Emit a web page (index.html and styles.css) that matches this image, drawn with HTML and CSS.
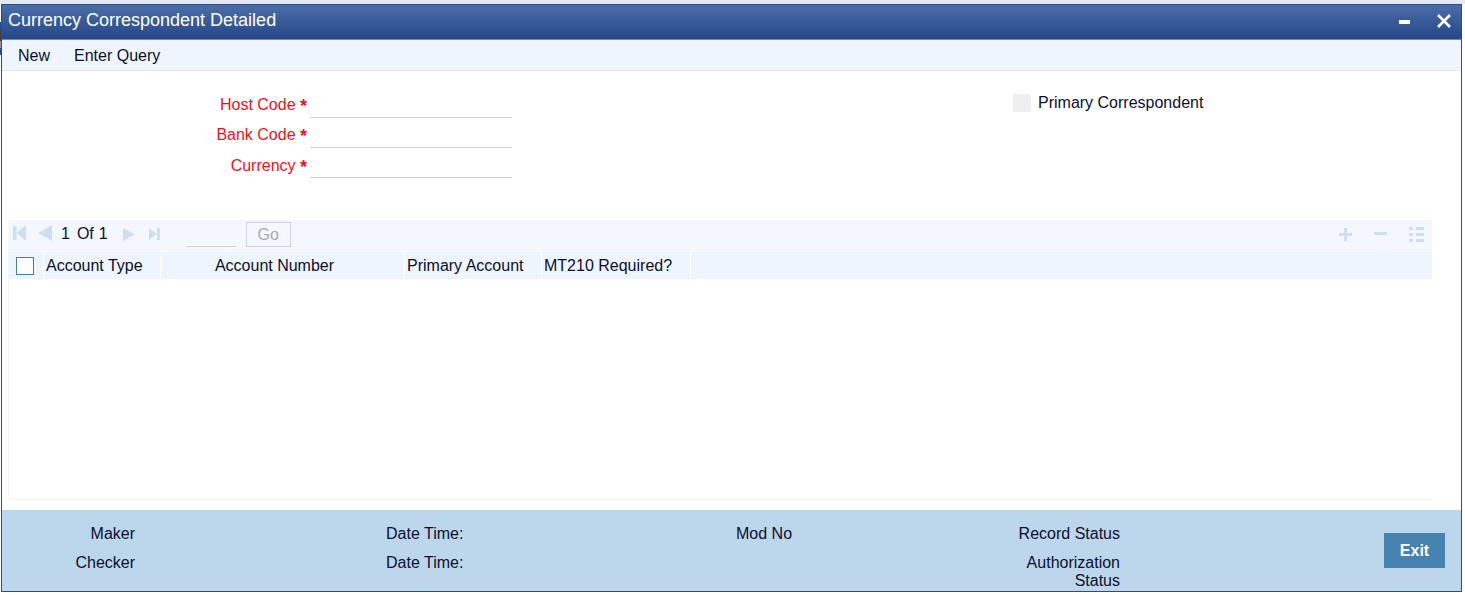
FILE: index.html
```html
<!DOCTYPE html>
<html lang="en">
<head>
<meta charset="utf-8">
<title>Currency Correspondent Detailed</title>
<link rel="stylesheet" href="styles.css">
</head>
<body>
<div class="window">
  <header class="titlebar">
    <h1 class="title">Currency Correspondent Detailed</h1>
    <div class="win-controls">
      <svg class="win-min" width="11" height="4" viewBox="0 0 11 4"><rect width="11" height="4" fill="#fff"/></svg>
      <svg class="win-close" width="14" height="14" viewBox="0 0 14 14"><path d="M1 1 L13 13 M13 1 L1 13" stroke="#fff" stroke-width="2.6" fill="none"/></svg>
    </div>
  </header>
  <nav class="menubar">
    <span class="menu-item">New</span>
    <span class="menu-item">Enter Query</span>
  </nav>
  <main class="content">
    <section class="form">
      <div class="fields">
        <div class="field"><label class="req-label">Host Code <span class="star">*</span></label><span class="line"></span></div>
        <div class="field"><label class="req-label">Bank Code <span class="star">*</span></label><span class="line"></span></div>
        <div class="field third"><label class="req-label">Currency <span class="star">*</span></label><span class="line"></span></div>
      </div>
      <div class="primary">
        <span class="check-disabled"></span>
        <span>Primary Correspondent</span>
      </div>
    </section>
    <section class="grid">
      <div class="pager">
        <div class="pager-left">
          <svg class="pg p-first" width="13" height="16" viewBox="0 0 13 16"><path d="M0 1h3.500v14H0z M13 0v16L3.500 8z" fill="#cfdff3"/></svg>
          <svg class="pg p-prev" width="14" height="16" viewBox="0 0 14 16"><path d="M14 0v16L0 8z" fill="#cfdff3"/></svg>
          <span class="pg-text t-cur">1</span><span class="pg-text t-of">Of</span><span class="pg-text t-tot">1</span>
          <svg class="pg p-next" width="12" height="13" viewBox="0 0 12 13"><path d="M0 0v13L12 6.500z" fill="#cfdff3"/></svg>
          <svg class="pg p-last" width="11" height="12" viewBox="0 0 11 12"><path d="M0 0v12L8 6z M8 0h3v12H8z" fill="#cfdff3"/></svg>
          <span class="pg-input"></span>
          <span class="go">Go</span>
        </div>
        <div class="pager-right">
          <svg width="13" height="13" viewBox="0 0 13 13"><path d="M5 0h3v5h5v3H8v5H5V8H0V5h5z" fill="#cfdff3"/></svg>
          <svg width="13" height="13" viewBox="0 0 13 13"><rect y="4" width="13" height="3" fill="#cfdff3"/></svg>
          <svg width="15" height="15" viewBox="0 0 15 15"><path d="M0 0h4v3H0z M7 0h8v3H7z M0 6h4v3H0z M7 6h8v3H7z M0 12h4v3H0z M7 12h8v3H7z" fill="#cfdff3"/></svg>
        </div>
      </div>
      <div class="grid-head">
        <div class="col c-check"><span class="checkbox"></span></div>
        <div class="col c-type">Account Type</div>
        <div class="col c-number">Account Number</div>
        <div class="col c-primary">Primary Account</div>
        <div class="col c-mt">MT210 Required?</div>
        <div class="col c-rest"></div>
      </div>
      <div class="grid-body"></div>
    </section>
  </main>
  <footer class="footer">
    <div class="audit a1"><span>Maker</span><span>Checker</span></div>
    <div class="audit a2"><span>Date Time:</span><span>Date Time:</span></div>
    <div class="audit a3"><span>Mod No</span></div>
    <div class="audit a4"><span>Record Status</span><span class="auth">Authorization Status</span></div>
    <button class="exit" type="button">Exit</button>
  </footer>
</div>
</body>
</html>
```
FILE: styles.css
```css
* { box-sizing: border-box; }
html, body { margin: 0; padding: 0; height: 100%; background: #fff; overflow: hidden; }
body {
  padding: 4px 3px 3px 1px;
  font-family: "Liberation Sans", Arial, sans-serif;
  font-size: 16px;
  color: #0a0f2c;
  background: linear-gradient(#e4e8f5 0 4px, #fff 4px 22px, #2b4c8c 22px 30px, #4a3f3c 30px 41px, #9a9a9a 41px 48px, #2b4c8c 48px 55px, #fff 55px) 0 0 / 1px 100% no-repeat, linear-gradient(#e4e8f5, #e4e8f5) 0 0 / 100% 4px no-repeat, #fff;
}
.window { height: 588px; display: flex; flex-direction: column; border: 1px solid #2b4c8c; background: #fff; }
.titlebar { height: 35px; flex: none; display: flex; justify-content: space-between; align-items: center; padding: 0 10px 0 6px; background: linear-gradient(#4a6fa8, #264688); border-bottom: 1px solid #6f8bb5; }
.title { margin: 0 0 4px; font-size: 18px; font-weight: 400; color: #fff; }
.win-controls { display: flex; align-items: center; gap: 27px; }
.win-min { display: block; }
.win-close { display: block; margin-bottom: 2px; }
.menubar { height: 31px; flex: none; display: flex; align-items: center; background: #eef5fe; border-bottom: 1px solid #e8e8ee; padding: 1px 0 0 16px; gap: 24px; }
.content { flex: 1; min-height: 0; padding: 0 29px 0 6px; display: flex; flex-direction: column; }
.form { height: 149px; display: flex; flex: none; position: relative; }
.fields { width: 504px; padding-top: 17px; display: flex; flex-direction: column; }
.field { height: 30px; display: flex; justify-content: flex-end; }
.req-label { color: #f0101e; line-height: 34px; margin-right: 3px; white-space: nowrap; }
.third .req-label { line-height: 36px; }
.star { font-size: 18px; font-weight: 700; line-height: 0; vertical-align: -2px; }
.line { width: 202px; height: 30px; border-bottom: 1px solid #d2d2d2; flex: none; }
.primary { position: absolute; left: 1005px; top: 23px; display: flex; align-items: center; gap: 7px; }
.check-disabled { width: 18px; height: 18px; background: #efefef; display: block; }
.grid { flex: 1; min-height: 0; display: flex; flex-direction: column; }
.pager { height: 31px; flex: none; display: flex; justify-content: space-between; align-items: flex-start; background: #f4f8fe; padding: 0 8px 0 5px; }
.pager-left { height: 28px; display: flex; align-items: center; }
.pg { display: block; margin-top: -2px; }
.p-prev { margin-left: 12px; }
.p-next { margin-left: 15px; margin-top: 0; }
.p-last { margin-left: 14px; margin-top: 0; }
.pg-text { color: #0a0f2c; }
.t-cur { margin-left: 9px; }
.t-of { margin-left: 7px; }
.t-tot { margin-left: 5px; }
.pg-input { width: 50px; height: 25px; border-bottom: 1px solid #d2d2d2; margin-left: 26px; margin-top: 1px; }
.go { width: 45px; height: 25px; margin: 1px 0 0 10px; border: 1px solid #cfd4da; color: #a9a9a9; text-align: center; line-height: 23px; background: #f4f8fe; }
.pager-right { height: 29px; display: flex; align-items: center; gap: 22px; }
.grid-head { height: 27px; flex: none; display: flex; margin-top: 1px; background: #eef5fe; }
.col { height: 27px; line-height: 28px; padding-left: 2px; border-right: 1px solid #fff; white-space: nowrap; }
.c-check { width: 36px; padding: 5px 0 0 8px; }
.checkbox { display: block; width: 18px; height: 18px; border: 1px solid #4a7ba6; background: #fff; }
.c-type { width: 117px; }
.c-number { width: 244px; text-align: center; padding: 0 16px 0 0; }
.c-primary { width: 137px; }
.c-mt { width: 149px; }
.c-rest { flex: 1; border: 0; }
.grid-body { flex: 1; border-left: 1px solid #f0f0f6; border-bottom: 1px solid #f0f0f6; margin-bottom: 10px; }
.footer { height: 81px; flex: none; background: #bcd7ec; position: relative; }
.audit { position: absolute; top: 15px; display: flex; flex-direction: column; }
.audit span { height: 29px; line-height: 18px; display: block; }
.a1 { right: 1326px; text-align: right; }
.a2 { left: 384px; }
.a3 { left: 734px; }
.a4 { right: 341px; width: 110px; text-align: right; }
.audit .auth { height: 36px; }
.exit { position: absolute; left: 1382px; top: 23px; width: 61px; height: 35px; border: 0; background: #4682b0; color: #fff; font: 700 16px "Liberation Sans", Arial, sans-serif; padding: 0; }
```
